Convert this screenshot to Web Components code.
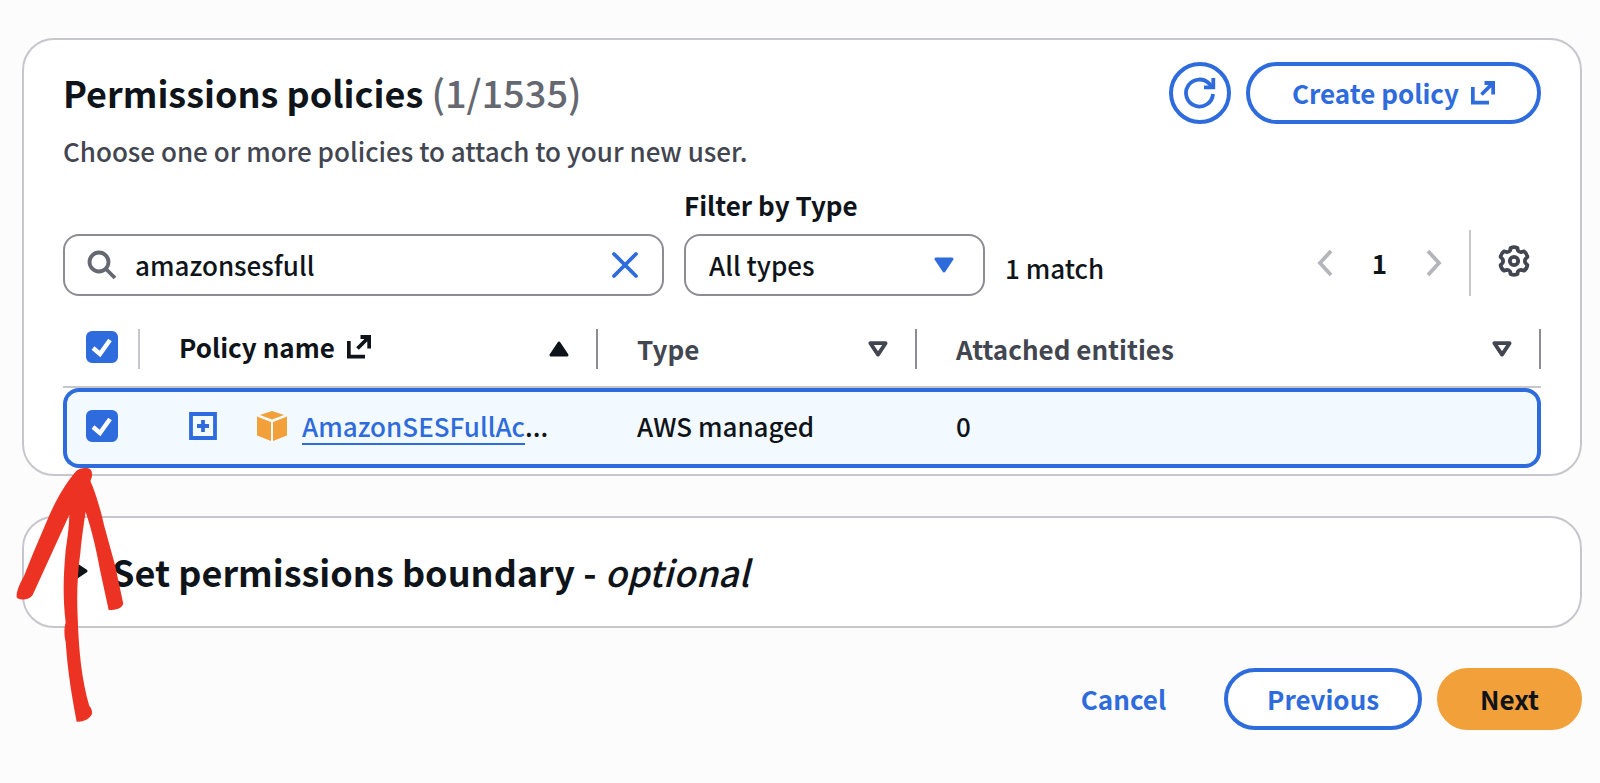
<!DOCTYPE html>
<html lang="en">
<head>
<meta charset="utf-8">
<title>Set permissions</title>
<style>
   body {
      --blue: #2e6bdc;
      --text: #0f141a;
      --muted: #424650;
      --line: #c6c6cd;
      --field: #8c8c94;
      --orange: #f2a03a;
      margin: 0;
      padding: 38px 18px 52px 22px;
      background: #fcfcfd;
      color: var(--text);
      font: 500 26px/36px "Noto Sans CJK SC", "Noto Sans", sans-serif;
   }
</style>
</head>
<body>
<permissions-page></permissions-page>

<script>
const icons = {
   refresh: [32, 32, `<path d="M29 17A13.5 13.5 0 1 1 25.6 7L28 10" /><path d="M29.3 1V10.4H20" />`],
   external: [24, 24, `<path d="M1.8 6V21.6H18M10.5 13.5L21 3M13.5 2H22.2V13.5" />`],
   search: [30, 30, `<circle cx="12" cy="12" r="9.5" /><path d="M19 19L28 28" />`],
   close: [28, 28, `<path d="M3 3L25 25M25 3L3 25" stroke-linecap="round" />`],
   prev: [16, 28, `<path d="M14 2L3 14L14 26" />`],
   next: [16, 28, `<path d="M2 2L13 14L2 26" />`],
   gear: [32, 32, `<circle cx="16" cy="16" r="4.2" />
      <path stroke-linejoin="round" d="M12.6 2.9Q16 1.4 19.4 2.9L19.8 5.2Q21 7.3 23.4 7L26 6.3Q29 8.4 29.4 12L27.4 14Q26.4 16 27.4 18L29.4 20Q29 23.6 26 25.7L23.4 25Q21 24.7 19.8 26.8L19.4 29.1Q16 30.6 12.6 29.1L12.2 26.8Q11 24.7 8.6 25L6 25.7Q3 23.6 2.6 20L4.6 18Q5.6 16 4.6 14L2.6 12Q3 8.4 6 6.3L8.6 7Q11 7.3 12.2 5.2Z" />`],
   down: [20, 16, `<path d="M2 2H18L10 14Z" fill="currentColor" stroke-linejoin="round" stroke-width="3" />`],
   up: [20, 16, `<path d="M2 14H18L10 2Z" fill="currentColor" stroke-linejoin="round" stroke-width="3" />`],
   sort: [20, 16, `<path d="M2.4 2.2H17.6L10 13.6Z" stroke-linejoin="round" />`],
   right: [16, 20, `<path d="M2 2V18L14 10Z" fill="currentColor" stroke-linejoin="round" stroke-width="3" />`],
   plus: [28, 28, `<path d="M2 2H26V26H2Z M14 8V20M8 14H20" />`],
   check: [32, 32, `<path d="M7 17L14 23L24 9" stroke-width="4.4" />`],
   box: [30, 30, `<g fill="currentColor" stroke="none"><path d="M15 0L27 4L15 8.6L3 4Z" /><path d="M0 5.6L14 11V30L0 24.6Z" /><path d="M30 5.6L16 11V30L30 24.6Z" /></g>`]
};

// every element gets an open root with its own markup
class BaseElement extends HTMLElement {
   constructor() {
      super();
      this.shadow = this.attachShadow({ mode: "open" });
   }

   connectedCallback() {
      this.shadow.innerHTML = `<style>* { box-sizing: border-box; }</style>` + this.render();
   }
}

class UiIcon extends BaseElement {
   render() {
      const [width, height, shape] = icons[this.getAttribute("name")];
      return `
<style>
   :host { display: inline-flex; flex: none; }
   svg { display: block; fill: none; stroke: currentColor; stroke-width: 3.8; }
</style>
<svg width="${width}" height="${height}" viewBox="0 0 ${width} ${height}" aria-hidden="true">${shape}</svg>`;
   }
}
customElements.define("ui-icon", UiIcon);

class UiButton extends BaseElement {
   render() {
      const label = this.getAttribute("label");
      return `
<style>
   :host { display: inline-flex; flex: none; }
   button {
      display: flex;
      align-items: center;
      justify-content: center;
      gap: 12px;
      height: 62px;
      padding: 0 var(--button-padding, 39px);
      border: 4px solid var(--blue);
      border-radius: 31px;
      background: white;
      color: var(--blue);
      font: inherit;
      font-weight: bold;
      cursor: pointer;
   }
   :host([variant="round"]) button { width: 62px; padding: 0; }
   :host([variant="link"]) button { background: none; border-color: transparent; }
   :host([variant="primary"]) button {
      background: var(--orange);
      border-color: var(--orange);
      color: var(--text);
   }
</style>
<button type="button" ${label ? `aria-label="${label}"` : ""}><slot></slot></button>`;
   }
}
customElements.define("ui-button", UiButton);

class UiCheckbox extends BaseElement {
   render() {
      return `
<style>
   :host { display: inline-grid; vertical-align: middle; }
   input, ui-icon { grid-area: 1 / 1; }
   input {
      appearance: none;
      width: 32px;
      height: 32px;
      margin: 0;
      border: 2px solid var(--field);
      border-radius: 6px;
      background: white;
   }
   input:checked { background: var(--blue); border-color: var(--blue); }
   ui-icon { color: white; pointer-events: none; }
   input:not(:checked) + ui-icon { visibility: hidden; }
</style>
<input type="checkbox" aria-label="${this.getAttribute("label")}" checked><ui-icon name="check"></ui-icon>`;
   }
}
customElements.define("ui-checkbox", UiCheckbox);

class UiCard extends BaseElement {
   render() {
      return `
<style>
   :host {
      display: block;
      border: 2px solid var(--line);
      border-radius: 32px;
      background: white;
   }
</style>
<slot></slot>`;
   }
}
customElements.define("ui-card", UiCard);

class CardHeader extends BaseElement {
   render() {
      return `
<style>
   :host { display: flex; justify-content: space-between; align-items: flex-start; }
   .text { padding-top: 5px; }
   h2 { margin: 0 0 16px; font-size: 36px; line-height: 50px; font-weight: bold; }
   h2 span { font-size: 38px; line-height: 1; font-weight: 500; color: #656871; }
   p { margin: 0; color: var(--muted); }
   .actions { display: flex; gap: 15px; --button-padding: 42px; }
</style>
<div class="text">
   <h2>Permissions policies <span>(1/1535)</span></h2>
   <p>Choose one or more policies to attach to your new user.</p>
</div>
<div class="actions">
   <ui-button variant="round" label="Refresh"><ui-icon name="refresh"></ui-icon></ui-button>
   <ui-button>Create policy <ui-icon name="external"></ui-icon></ui-button>
</div>`;
   }
}
customElements.define("card-header", CardHeader);

class SearchField extends BaseElement {
   render() {
      return `
<style>
   :host {
      display: flex;
      align-items: center;
      gap: 18px;
      height: 62px;
      padding: 0 23px 0 22px;
      border: 2px solid var(--field);
      border-radius: 16px;
      box-sizing: border-box;
   }
   ui-icon { color: #656871; }
   input {
      flex: 1;
      min-width: 0;
      padding: 0;
      border: 0;
      outline: none;
      background: none;
      color: inherit;
      font: inherit;
   }
   button { display: flex; padding: 0; border: 0; background: none; }
   button ui-icon { color: var(--blue); }
</style>
<ui-icon name="search"></ui-icon>
<input type="text" aria-label="Search policies" value="amazonsesfull">
<button type="button" aria-label="Clear"><ui-icon name="close"></ui-icon></button>`;
   }
}
customElements.define("search-field", SearchField);

class TypeFilter extends BaseElement {
   render() {
      return `
<style>
   :host { display: grid; gap: 11px; }
   label { font-weight: bold; }
   .select { display: grid; align-items: center; }
   select, ui-icon { grid-area: 1 / 1; }
   select {
      appearance: none;
      width: 100%;
      height: 62px;
      padding: 0 60px 0 23px;
      border: 2px solid var(--field);
      border-radius: 16px;
      background: white;
      color: inherit;
      font: inherit;
   }
   ui-icon { justify-self: end; margin-right: 31px; color: var(--blue); pointer-events: none; }
</style>
<label for="type">Filter by Type</label>
<div class="select">
   <select id="type"><option>All types</option></select>
   <ui-icon name="down"></ui-icon>
</div>`;
   }
}
customElements.define("type-filter", TypeFilter);

class PageNav extends BaseElement {
   render() {
      return `
<style>
   :host { display: flex; align-items: center; height: 66px; margin-left: auto; }
   button { display: flex; padding: 0; border: 0; background: none; color: var(--muted); font: inherit; }
   button:disabled { color: #b4b4bb; }
   .page { margin: 0 39px; font-weight: bold; color: var(--text); }
   .settings { align-self: stretch; align-items: center; margin-left: 27px; padding: 0 11px 4px 27px; border-left: 2px solid var(--line); }
</style>
<button type="button" aria-label="Previous page" disabled><ui-icon name="prev"></ui-icon></button>
<button type="button" class="page">1</button>
<button type="button" aria-label="Next page" disabled><ui-icon name="next"></ui-icon></button>
<button type="button" class="settings" aria-label="Preferences"><ui-icon name="gear"></ui-icon></button>`;
   }
}
customElements.define("page-nav", PageNav);

class FilterBar extends BaseElement {
   render() {
      return `
<style>
   :host { display: flex; align-items: flex-end; gap: 20px; }
   search-field { flex: 0 1 601px; }
   type-filter { flex: 0 1 301px; }
   .matches { line-height: 56px; }
</style>
<search-field></search-field>
<type-filter></type-filter>
<span class="matches">1 match</span>
<page-nav></page-nav>`;
   }
}
customElements.define("filter-bar", FilterBar);

class PolicyTable extends BaseElement {
   render() {
      return `
<style>
   :host { display: block; }
   table { width: 100%; border-collapse: separate; border-spacing: 0; table-layout: fixed; }
   .select { width: 77px; }
   .name { width: 458px; }
   .type { width: 319px; }
   th, td { padding: 0; text-align: left; font-weight: inherit; }
   th { height: 76px; border-bottom: 2px solid var(--line); }
   th > div {
      display: flex;
      align-items: center;
      justify-content: space-between;
      height: 40px;
      padding: 0 27px 0 39px;
      border-right: 2px solid var(--field);
      color: var(--muted);
      font-weight: bold;
   }
   th.select > div { padding: 0 0 4px 23px; border-color: var(--line); }
   th.name > div { color: var(--text); }
   th.name span { display: flex; align-items: center; gap: 12px; padding-bottom: 4px; }
   td {
      height: 80px;
      padding: 0 0 4px 39px;
      border: solid var(--blue);
      border-width: 4px 0;
      background: #f2faff;
   }
   td:first-child { padding-left: 19px; border-left-width: 4px; border-radius: 16px 0 0 16px; }
   td:last-child { border-right-width: 4px; border-radius: 0 16px 16px 0; }
   td > div { display: flex; align-items: center; white-space: nowrap; }
   .expand { display: flex; padding: 0; margin: 0 40px 0 10px; border: 0; background: none; color: var(--blue); }
   .box { color: var(--orange); margin-right: 15px; }
   a { color: var(--blue); text-decoration: underline 2px; text-underline-offset: 6px; }
</style>
<table>
   <thead>
      <tr>
         <th class="select"><div><ui-checkbox label="Select all policies"></ui-checkbox></div></th>
         <th class="name"><div><span>Policy name <ui-icon name="external"></ui-icon></span><ui-icon name="up"></ui-icon></div></th>
         <th class="type"><div>Type<ui-icon name="sort"></ui-icon></div></th>
         <th><div>Attached entities<ui-icon name="sort"></ui-icon></div></th>
      </tr>
   </thead>
   <tbody>
      <tr>
         <td><div><ui-checkbox label="Select policy"></ui-checkbox></div></td>
         <td><div>
            <button class="expand" type="button" aria-label="Expand"><ui-icon name="plus"></ui-icon></button>
            <ui-icon class="box" name="box"></ui-icon>
            <a href="#">AmazonSESFullAc</a>...
         </div></td>
         <td>AWS managed</td>
         <td>0</td>
      </tr>
   </tbody>
</table>`;
   }
}
customElements.define("policy-table", PolicyTable);

class BoundarySection extends BaseElement {
   render() {
      return `
<style>
   :host { display: block; padding: 28px 40px 30px; }
   h2 { margin: 0; font-size: 36px; line-height: 50px; }
   button {
      display: flex;
      align-items: center;
      gap: 24px;
      padding: 0 0 0 8px;
      border: 0;
      background: none;
      color: inherit;
      font: inherit;
   }
   i { font-weight: 500; }
</style>
<h2><button type="button" aria-expanded="false">
   <ui-icon name="right"></ui-icon>
   <span>Set permissions boundary - <i>optional</i></span>
</button></h2>`;
   }
}
customElements.define("boundary-section", BoundarySection);

// hand-drawn pointer laid over both cards
class PointerArrow extends BaseElement {
   render() {
      return `
<style>
   :host { position: absolute; left: 0; top: 450px; pointer-events: none; }
   svg { display: block; }
</style>
<svg width="140" height="290" viewBox="0 0 420 870" fill="#ec3323" aria-hidden="true">
   <path d="M228 64C238 54 250 54 262 54C273 56 277 64 276 78C275 88 270 90 272 95C286 125 305 190 312 225L345 345L370 462C363 476 350 480 326 480L300 360C288 295 275 240 257 186C250 230 246 260 241 310C232 370 230 440 233 500C236 600 245 690 268 768C275 775 277 785 276 792C268 808 250 816 230 815C220 760 204 680 197 575C192 560 192 530 197 518C188 440 190 380 197 300C203 260 207 230 208 194L98 435C88 450 58 453 50 442C48 425 60 400 72 378L100 308L148 196C166 155 196 100 228 64Z" />
</svg>`;
   }
}
customElements.define("pointer-arrow", PointerArrow);

class PermissionsPage extends BaseElement {
   render() {
      return `
<style>
   :host { display: block; }
   .policies { padding: 22px 39px 6px; }
   filter-bar { margin: 18px 0 16px; }
   .boundary { margin-top: 40px; }
   footer { display: flex; justify-content: flex-end; gap: 15px; margin-top: 40px; }
</style>
<main>
   <ui-card class="policies">
      <card-header></card-header>
      <filter-bar></filter-bar>
      <policy-table></policy-table>
   </ui-card>
   <ui-card class="boundary"><boundary-section></boundary-section></ui-card>
   <footer>
      <ui-button variant="link">Cancel</ui-button>
      <ui-button>Previous</ui-button>
      <ui-button variant="primary">Next</ui-button>
   </footer>
</main>
<pointer-arrow></pointer-arrow>`;
   }
}
customElements.define("permissions-page", PermissionsPage);
</script>
</body>
</html>
